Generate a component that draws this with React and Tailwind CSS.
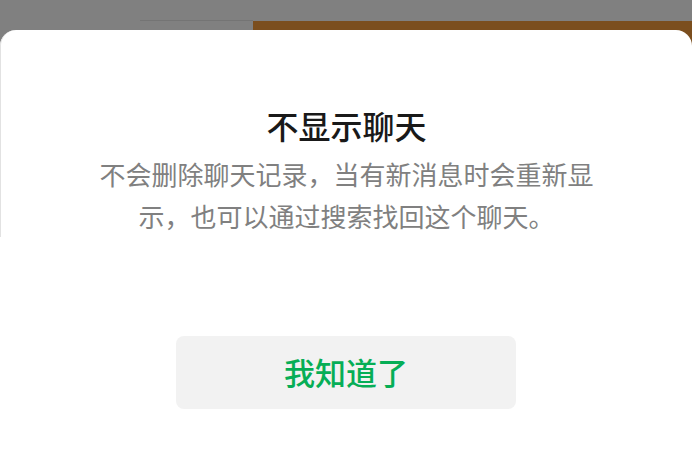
import React from "react";

const cjk = { fontFamily: '"Noto Sans CJK SC", "Noto Sans", sans-serif' };

export default function App() {
  return (
    <div
      className="w-[692px] h-[464px] overflow-hidden bg-[#808080] flex flex-col"
      style={cjk}
    >
      {/* page behind the sheet */}
      <div className="h-[46px] flex items-start pt-[20px] shrink-0">
        <div className="w-[140px]"></div>
        <div className="w-[113px] h-px bg-[#747474]"></div>
        <div className="flex-1 h-[26px] mt-px bg-[#7b4e1e]"></div>
      </div>

      {/* bottom sheet */}
      <div className="-mt-4 flex-1 bg-white rounded-t-2xl flex flex-col">
        <div className="rounded-tl-2xl border-l border-[#e2e2e2] flex flex-col items-center pt-[75px] pb-[0px]">
          <h1 className="text-[32px] leading-[40px] font-medium text-[#191919]">
            不显示聊天
          </h1>
          <p className="mt-2 w-[512px] text-center text-[26px] leading-[42px] text-[#808080]">
            不会删除聊天记录，当有新消息时会重新显示，也可以通过搜索找回这个聊天。
          </p>
        </div>

        <div className="flex justify-center mt-[99px]">
          <button className="w-[340px] h-[73px] rounded-lg bg-[#f2f2f2] text-[31px] font-medium text-[#06ae56] flex items-center justify-center">
            我知道了
          </button>
        </div>
      </div>
    </div>
  );
}
